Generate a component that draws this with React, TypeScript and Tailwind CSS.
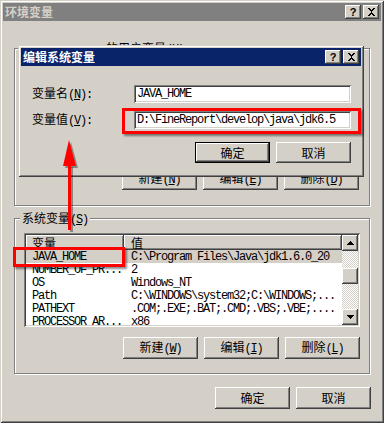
import type { ReactNode } from "react";

const cjk = "font-['Noto_Sans_CJK_SC',sans-serif]";
const mono = "font-['Liberation_Mono','Noto_Sans_CJK_SC',monospace] text-[12px] tracking-[-1.2px]";

const raised =
  "bg-[#d4d0c8] shadow-[inset_-1px_-1px_#404040,inset_1px_1px_#ffffff,inset_-2px_-2px_#808080,inset_2px_2px_#d4d0c8]";
const defRaised =
  "bg-[#d4d0c8] shadow-[inset_0_0_0_1px_#000000,inset_-2px_-2px_#404040,inset_2px_2px_#ffffff,inset_-3px_-3px_#808080]";
const sunken =
  "shadow-[inset_1px_1px_#808080,inset_-1px_-1px_#ffffff,inset_2px_2px_#404040,inset_-2px_-2px_#d4d0c8]";
const frame =
  "bg-[#d4d0c8] shadow-[inset_1px_1px_#d4d0c8,inset_-1px_-1px_#404040,inset_2px_2px_#ffffff,inset_-2px_-2px_#808080]";

function Key({ k, tail = "" }: { k: string; tail?: string }) {
  return (
    <span className={mono}>
      (<u>{k}</u>){tail}
    </span>
  );
}

function Btn({ children, def = false, tall = true }: { children: ReactNode; def?: boolean; tall?: boolean }) {
  return (
    <div
      className={`flex w-[75px] items-center justify-center text-[12px] leading-none text-black ${cjk} ${
        tall ? "h-[22px]" : "h-[21px]"
      } ${def ? defRaised : raised}`}
    >
      <span>{children}</span>
    </div>
  );
}

function CloseGlyph() {
  return (
    <svg width="9" height="8" viewBox="0 0 9 8" shapeRendering="crispEdges">
      <path d="M1 0h2v1h1v1h1V1h1V0h2v1H7v1H6v1H5v2h1v1h1v1h1v1H6V7H5V6H4v1H3v1H1V7h1V6h1V5h1V3H3V2H2V1H1z" fill="#000" />
    </svg>
  );
}

function TitleButtons() {
  return (
    <div className="flex gap-[2px]">
      <div className={`flex h-[14px] w-[16px] items-center justify-center ${raised}`}>
        <span className="font-['Liberation_Sans',sans-serif] text-[11px] font-bold leading-none text-black">?</span>
      </div>
      <div className={`flex h-[14px] w-[16px] items-center justify-center ${raised}`}>
        <CloseGlyph />
      </div>
    </div>
  );
}

function Group({ label, className, children }: { label: ReactNode; className: string; children?: ReactNode }) {
  return (
    <div className={`relative border border-[#808080] shadow-[inset_1px_1px_#ffffff,1px_1px_#ffffff] ${className}`}>
      <span
        className={`absolute left-[5px] top-[-8px] whitespace-nowrap bg-[#d4d0c8] px-[2px] text-[12px] leading-[14px] text-black ${cjk}`}
      >
        {label}
      </span>
      {children}
    </div>
  );
}

function Arrow({ down = false }: { down?: boolean }) {
  return (
    <div className={`flex h-[16px] w-[16px] items-center justify-center ${raised}`}>
      <svg width="7" height="4" viewBox="0 0 7 4" shapeRendering="crispEdges">
        <polygon points={down ? "0,0 7,0 3.5,4" : "3.5,0 7,4 0,4"} fill="#000" />
      </svg>
    </div>
  );
}

const rows: [string, string][] = [
  ["JAVA_HOME", "C:\\Program Files\\Java\\jdk1.6.0_20"],
  ["NUMBER_OF_PR...", "2"],
  ["OS", "Windows_NT"],
  ["Path", "C:\\WINDOWS\\system32;C:\\WINDOWS;..."],
  ["PATHEXT", ".COM;.EXE;.BAT;.CMD;.VBS;.VBE;...."],
  ["PROCESSOR_AR...", "x86"],
];

function VarList() {
  return (
    <div className={`flex h-[94px] w-[336px] bg-white p-[2px] ${sunken}`}>
      <div className="flex flex-1 flex-col overflow-hidden">
        <div className={`flex h-[15px] shrink-0 text-[12px] leading-none text-black ${cjk}`}>
          <div className={`flex w-[98px] items-center pl-[6px] ${raised}`}>变量</div>
          <div className={`flex flex-1 items-center pl-[7px] ${raised}`}>值</div>
        </div>
        {rows.map(([name, value], i) => (
          <div
            key={name}
            className={`flex h-[13px] shrink-0 items-center leading-none text-black ${mono} ${
              i === 0 ? "bg-[#d4d0c8]" : ""
            }`}
          >
            <span className="w-[98px] whitespace-nowrap pl-[6px]">{name}</span>
            <span className="whitespace-nowrap pl-[7px]">{value}</span>
          </div>
        ))}
      </div>
      <div className="flex w-[16px] flex-col bg-[image:repeating-conic-gradient(#d4d0c8_0_25%,#ffffff_0_50%)] bg-[length:2px_2px]">
        <Arrow />
        <div className="h-[17px]" />
        <div className={`h-[16px] w-[16px] ${raised}`} />
        <div className="flex-1" />
        <Arrow down />
      </div>
    </div>
  );
}

function EditDialog() {
  return (
    <div className={`absolute left-[18px] top-[45px] h-[132px] w-[346px] ${frame}`}>
      <div className="mx-[3px] mt-[3px] flex h-[18px] items-center justify-between bg-[#0a246a] pl-[2px] pr-[2px]">
        <span className={`text-[12px] font-bold leading-none text-white ${cjk}`}>编辑系统变量</span>
        <TitleButtons />
      </div>
      <div className={`flex flex-col pl-[14px] pr-[13px] text-[12px] text-black ${cjk}`}>
        <div className="mt-[19px] flex h-[18px] items-center">
          <span className="w-[102px] whitespace-nowrap leading-none">
            变量名<Key k="N" tail=":" />
          </span>
          <div className={`flex h-[18px] w-[217px] items-center bg-white pl-[3px] leading-none ${mono} ${sunken}`}>
            JAVA_HOME
          </div>
        </div>
        <div className="mt-[8px] flex h-[18px] items-center">
          <span className="w-[102px] whitespace-nowrap leading-none">
            变量值<Key k="V" tail=":" />
          </span>
          <div className={`flex h-[18px] w-[217px] items-center bg-white pl-[3px] leading-none ${mono} ${sunken}`}>
            D:\FineReport\develop\java\jdk6.5
          </div>
        </div>
        <div className="mt-[13px] flex justify-end gap-[6px]">
          <Btn def tall={false}>
            确定
          </Btn>
          <Btn tall={false}>取消</Btn>
        </div>
      </div>
    </div>
  );
}

export default function App() {
  return (
    <div className={`relative h-[423px] w-[384px] overflow-hidden ${frame}`}>
      <div className="mx-[3px] mt-[3px] flex h-[18px] items-center justify-between bg-[#808080] pl-[2px] pr-[2px]">
        <span className={`text-[12px] font-bold leading-none text-[#d4d0c8] ${cjk}`}>环境变量</span>
        <TitleButtons />
      </div>

      <div className="flex flex-col px-[14px]">
        <Group
          className="mt-[27px] h-[158px]"
          label={
            <>
              <span className={`relative top-[4px] ${mono}`}>Administrator </span>的用户变量<Key k="U" />
            </>
          }
        >
          <div className="flex h-full flex-col justify-end pb-[15px] pr-[10px]">
            <div className="flex justify-end gap-[6px]">
              <Btn>
                新建<Key k="N" />
              </Btn>
              <Btn>
                编辑<Key k="E" />
              </Btn>
              <Btn>
                删除<Key k="D" />
              </Btn>
            </div>
          </div>
        </Group>

        <Group
          className="mt-[12px] h-[156px]"
          label={
            <>
              系统变量<Key k="S" />
            </>
          }
        >
          <div className="flex flex-col items-end pr-[9px] pt-[14px]">
            <VarList />
            <div className="mt-[10px] flex gap-[6px]">
              <Btn>
                新建<Key k="W" />
              </Btn>
              <Btn>
                编辑<Key k="I" />
              </Btn>
              <Btn>
                删除<Key k="L" />
              </Btn>
            </div>
          </div>
        </Group>

        <div className="-mr-[1px] mt-[13px] flex justify-end gap-[6px]">
          <Btn>确定</Btn>
          <Btn>取消</Btn>
        </div>
      </div>

      <EditDialog />

      {/* red annotations */}
      <div className="pointer-events-none absolute left-[122px] top-[108px] h-[26px] w-[239px] border-[3px] border-[#ff0000] shadow-[2px_2px_2px_rgba(0,0,0,0.45)]" />
      <div className="pointer-events-none absolute left-[13px] top-[247px] h-[20px] w-[112px] border-[3px] border-[#ff0000] shadow-[2px_2px_2px_rgba(0,0,0,0.45)]" />
      <svg
        className="pointer-events-none absolute left-[60px] top-[136px]"
        width="24"
        height="100"
        viewBox="0 0 24 100"
      >
        <g fill="rgba(0,0,0,0.35)" transform="translate(2 2)">
          <polygon points="9,4 16,30 3,30" />
          <rect x="8" y="29" width="3" height="65" />
        </g>
        <g fill="#ff0000">
          <polygon points="9,4 16,30 3,30" />
          <rect x="8" y="29" width="3" height="65" />
        </g>
      </svg>
    </div>
  );
}
